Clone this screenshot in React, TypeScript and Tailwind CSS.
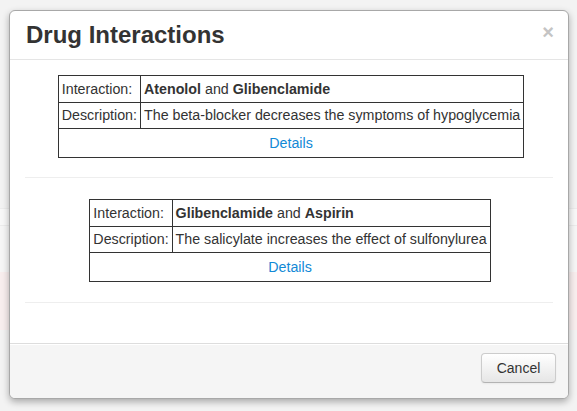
import React from 'react';

type Interaction = {
  drugA: string;
  drugB: string;
  description: string;
};

const interactions: Interaction[] = [
  {
    drugA: 'Atenolol',
    drugB: 'Glibenclamide',
    description: 'The beta-blocker decreases the symptoms of hypoglycemia',
  },
  {
    drugA: 'Glibenclamide',
    drugB: 'Aspirin',
    description: 'The salicylate increases the effect of sulfonylurea',
  },
];

const InteractionTable = ({ item }: { item: Interaction }) => {
  return (
    <table className="mx-auto border-collapse border border-[#333] text-[14.25px] leading-[19px] text-[#333]">
      <tbody>
        <tr className="h-[27px]">
          <td className="border border-[#333] px-[3px]">Interaction:</td>
          <td className="border border-[#333] px-[3px]">
            <b>{item.drugA}</b> and <b>{item.drugB}</b>
          </td>
        </tr>
        <tr className="h-[26px]">
          <td className="border border-[#333] px-[3px]">Description:</td>
          <td className="border border-[#333] px-[3px]">{item.description}</td>
        </tr>
        <tr className="h-[29px]">
          <td colSpan={2} className="border border-[#333] px-[3px] text-center">
            <a href="#" className="text-[#1289d6]">
              Details
            </a>
          </td>
        </tr>
      </tbody>
    </table>
  );
};

export default function App() {
  return (
    <div className="relative h-[411px] w-[577px] overflow-hidden bg-[#f3f3f3] font-['Liberation_Sans',Arial,sans-serif]">
      {/* faint page content behind the backdrop */}
      <div className="flex flex-col pt-[208px]">
        <div className="h-[18px] border-y border-[#ececec] bg-[#f8f8f8]" />
        <div className="h-[46px] bg-[#f6f6f6]" />
        <div className="h-[58px] bg-[#f8eeee]" />
      </div>

      {/* modal */}
      <div className="absolute left-[9px] top-[10px] flex h-[389px] w-[560px] flex-col overflow-hidden rounded-[6px] border border-[#a8a8a8] bg-white shadow-[0_3px_7px_rgba(0,0,0,0.3)]">
        <div className="flex h-[49px] shrink-0 items-center justify-between border-b border-[#e5e5e5] pl-[16px] pr-[14px]">
          <h3 className="mb-[1px] text-[24px] font-bold leading-[30px] text-[#333]">Drug Interactions</h3>
          <span className="mb-[6px] text-[20px] font-bold leading-[20px] text-[#c4c4c4]">×</span>
        </div>

        <div className="flex flex-1 flex-col px-[15px] pt-[15px]">
          <div className="pl-[4px]">
            <InteractionTable item={interactions[0]} />
          </div>
          <div className="mt-[19px] border-t border-[#eeeeee]" />
          <div className="mt-[21px] pl-[2px]">
            <InteractionTable item={interactions[1]} />
          </div>
          <div className="mt-[20px] border-t border-[#eeeeee]" />
        </div>

        <div className="flex h-[55px] shrink-0 items-start justify-end border-t border-[#dddddd] bg-[#f5f5f5] pr-[12px] pt-[9px] shadow-[inset_0_1px_0_#ffffff]">
          <button className="h-[30px] w-[75px] rounded-[4px] border border-[#cccccc] border-b-[#b3b3b3] bg-gradient-to-b from-white to-[#e6e6e6] text-[14px] leading-[20px] text-[#333] shadow-[inset_0_1px_0_rgba(255,255,255,0.2),0_1px_2px_rgba(0,0,0,0.05)]">
            Cancel
          </button>
        </div>
      </div>
    </div>
  );
}
